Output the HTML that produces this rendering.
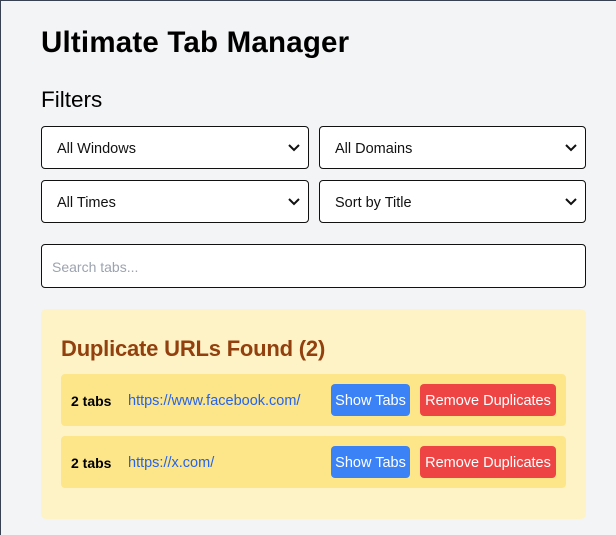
<!DOCTYPE html>
<html><head><meta charset="utf-8"><style>
*{box-sizing:border-box;margin:0;padding:0}
body{width:616px;height:535px;background:#f3f4f6;font-family:"Liberation Sans",sans-serif;position:relative;overflow:hidden}
.a{position:absolute}
.bl1{left:0;top:0;width:1px;height:535px;background:#374151}
.bt1{left:0;top:0;width:616px;height:1px;background:#374151}
h1{position:absolute;left:41px;top:26px;font-size:29.5px;font-weight:bold;color:#000;letter-spacing:0.2px}
.f{left:41px;top:87px;font-size:22.5px;color:#000}
.sel{position:absolute;height:43px;border:1px solid #111;border-radius:4px;background:#fff;font-size:14.5px;padding-left:15px;line-height:45px;color:#111}
.sel svg{position:absolute;right:8px;top:16px}
.search{left:41px;top:244px;width:545px;height:44px;border:1px solid #111;border-radius:4px;background:#fff;font-size:14px;color:#9ca3af;padding-left:10px;line-height:44px}
.box{left:41px;top:309px;width:545px;height:210px;background:#fef3c7;border-radius:5px}
.h2{left:61px;top:336px;font-size:22px;font-weight:bold;color:#92400e;letter-spacing:-0.2px}
.row{position:absolute;left:61px;width:505px;height:52px;background:#fde68a;border-radius:4px}
.row b{position:absolute;left:10px;top:19px;font-size:14px}
.row .u{position:absolute;left:67px;top:19px;font-size:14.5px;color:#2563eb}
.btn{position:absolute;top:10px;height:32px;border-radius:4px;color:#fff;font-size:14.5px;line-height:34px;text-align:center}
.bb{left:270px;width:79px;background:#3b82f6}
.rd{left:359px;width:136px;background:#ef4444}
</style></head><body>
<div class="a bl1"></div><div class="a bt1"></div>
<h1>Ultimate Tab Manager</h1>
<div class="a f">Filters</div>
<div class="sel" style="left:41px;top:126px;width:268px">All Windows<svg width="12" height="10" viewBox="0 0 12 10"><path d="M1 2l5 5 5-5" stroke="#111" stroke-width="2" fill="none"/></svg></div>
<div class="sel" style="left:319px;top:126px;width:267px">All Domains<svg width="12" height="10" viewBox="0 0 12 10"><path d="M1 2l5 5 5-5" stroke="#111" stroke-width="2" fill="none"/></svg></div>
<div class="sel" style="left:41px;top:180px;width:268px">All Times<svg width="12" height="10" viewBox="0 0 12 10"><path d="M1 2l5 5 5-5" stroke="#111" stroke-width="2" fill="none"/></svg></div>
<div class="sel" style="left:319px;top:180px;width:267px">Sort by Title<svg width="12" height="10" viewBox="0 0 12 10"><path d="M1 2l5 5 5-5" stroke="#111" stroke-width="2" fill="none"/></svg></div>
<div class="a search">Search tabs...</div>
<div class="a box"></div>
<div class="a h2">Duplicate URLs Found (2)</div>
<div class="row" style="top:374px"><b>2 tabs</b><span class="u">https://www.facebook.com/</span><div class="btn bb">Show Tabs</div><div class="btn rd">Remove Duplicates</div></div>
<div class="row" style="top:436px"><b>2 tabs</b><span class="u">https://x.com/</span><div class="btn bb">Show Tabs</div><div class="btn rd">Remove Duplicates</div></div>
</body></html>
